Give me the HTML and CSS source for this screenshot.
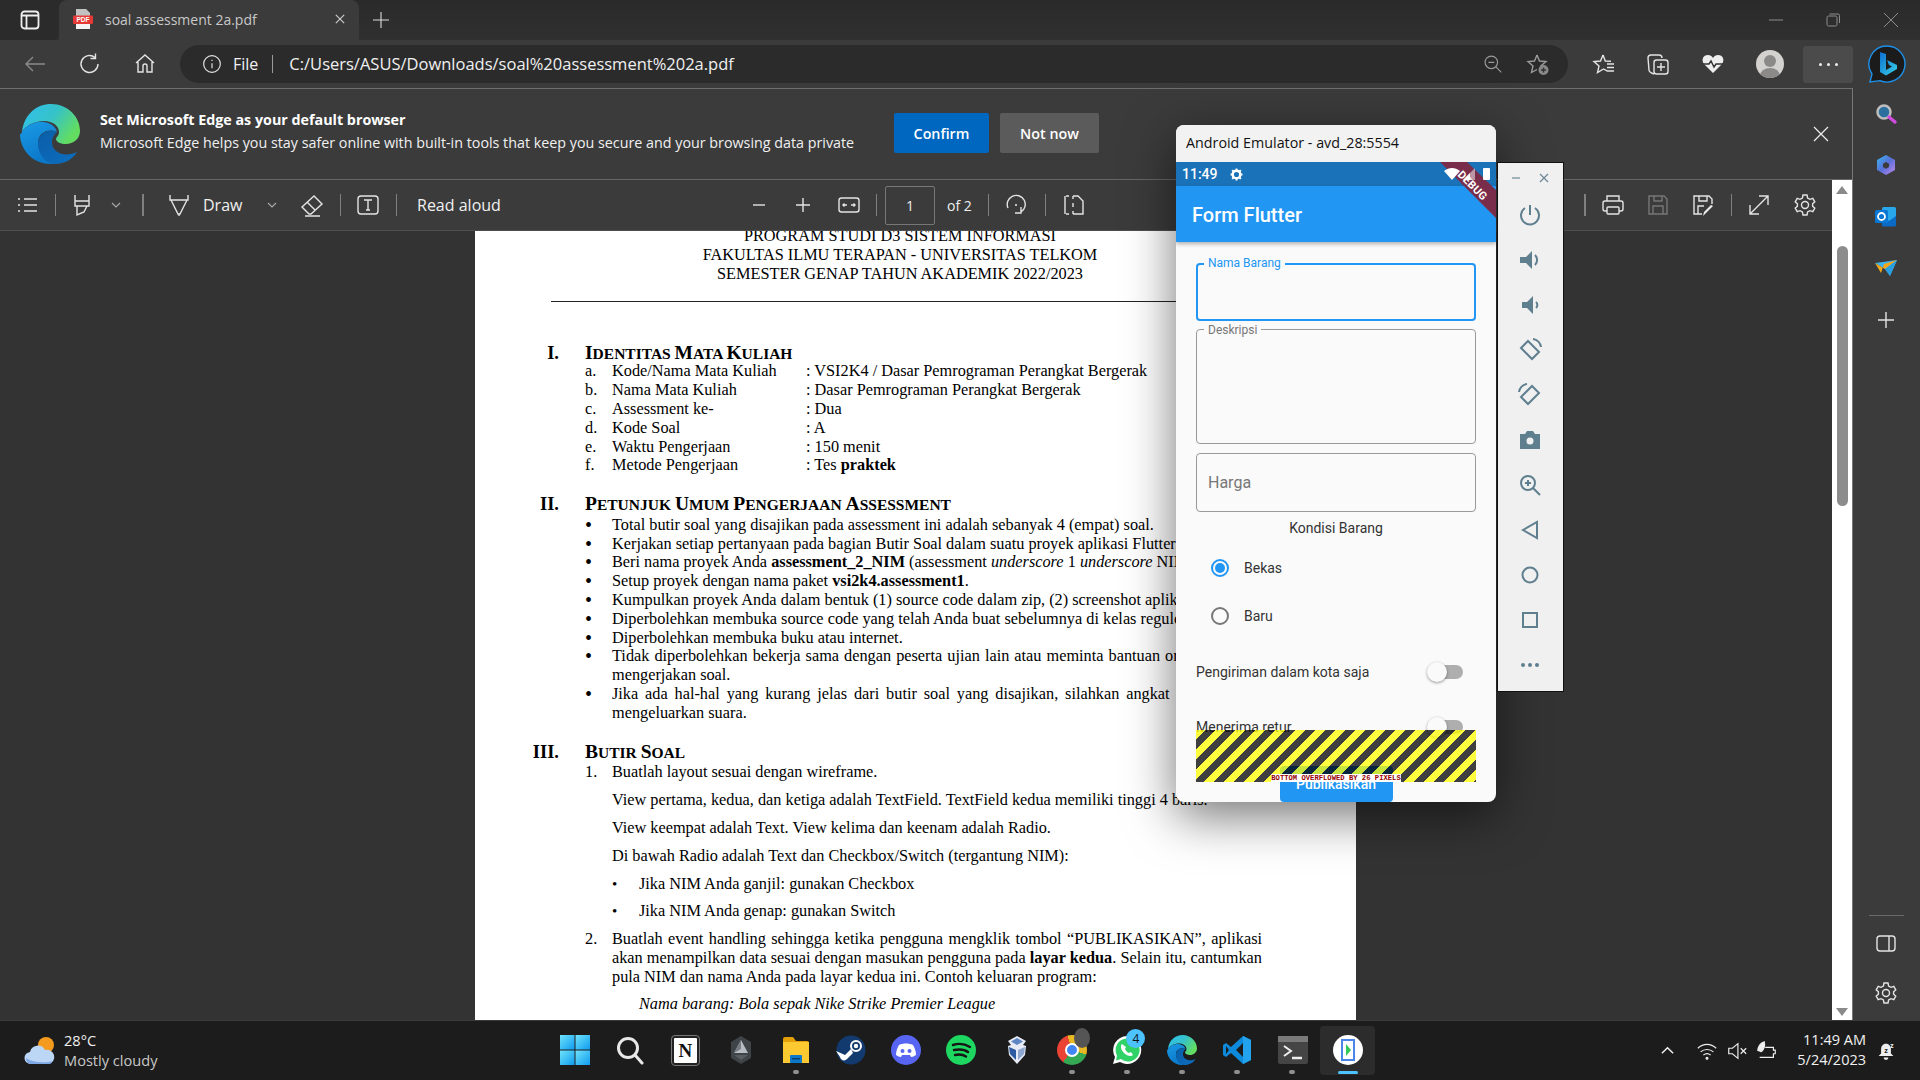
FILE: index.html
```html
<!DOCTYPE html>
<html lang="en">
<head>
<meta charset="utf-8">
<title>soal assessment 2a.pdf</title>
<link rel="stylesheet" href="styles.css">
</head>
<body>
<svg class="defs" width="0" height="0">
  <defs>
    <linearGradient id="eg1" x1="0" y1="0" x2="1" y2="0.5"><stop offset="0" stop-color="#2fc0f0"/><stop offset="0.55" stop-color="#36c2c8"/><stop offset="1" stop-color="#62dd62"/></linearGradient>
    <linearGradient id="eg2" x1="0" y1="0" x2="0.4" y2="1"><stop offset="0" stop-color="#1a9ae6"/><stop offset="1" stop-color="#0b78c8"/></linearGradient>
    <linearGradient id="eg3" x1="0" y1="0" x2="1" y2="1"><stop offset="0" stop-color="#0a5ea8"/><stop offset="1" stop-color="#0d6fc0"/></linearGradient>
    <linearGradient id="wg" x1="0" y1="0" x2="1" y2="1"><stop offset="0" stop-color="#6fe3fb"/><stop offset="1" stop-color="#0f9bef"/></linearGradient>
    <linearGradient id="bg" x1="0" y1="0" x2="1" y2="1"><stop offset="0" stop-color="#0d6fd0"/><stop offset="1" stop-color="#39d0e8"/></linearGradient>
    <linearGradient id="cg" x1="0" y1="0" x2="1" y2="1"><stop offset="0" stop-color="#35b8ef"/><stop offset="0.5" stop-color="#5a6fd8"/><stop offset="1" stop-color="#c08be8"/></linearGradient>
    <symbol id="edge" viewBox="0 0 60 60">
      <path d="M2 28C4 10 17 0 31 0c17 0 29 13 29 27 0 8-7 13-14 13-5 0-10-2-10-5 0-2 3-3 3-7 0-6-6-11-15-11C14 17 5 22 2 28z" fill="url(#eg1)"/>
      <path d="M1 30C4 22 15 17 24 18c7 1 12 5 13 10-9-4-19 1-19 11 0 9 7 17 16 21H30C13 60 0 46 0 30z" fill="url(#eg2)"/>
      <path d="M37 28c-10-4-19 2-19 12 0 9 7 20 17 20 10 0 18-5 22-12-6 3-15 4-21-1-6-5-5-14 1-19z" fill="url(#eg3)"/>
    </symbol>
  </defs>
</svg>

<header class="tabbar">
  <div class="tab-actions"><svg class="ic ic-lt" viewBox="0 0 24 24"><rect x="3.5" y="3.5" width="17" height="17" rx="3"/><path d="M3.5 7.5h17M8.5 7.5v13"/></svg></div>
  <div class="tab">
    <svg class="pdficon" viewBox="0 0 20 20"><path d="M3 0h10l4 4v16H3z" fill="#f4f4f4"/><path d="M3 0h10l4 4v3H3z" fill="#2a2a2a" opacity=".25"/><rect x="0" y="6.5" width="20" height="8.5" rx="1" fill="#e53935"/><text x="10" y="13" text-anchor="middle" class="pdftext">PDF</text></svg>
    <span class="tab-title">soal assessment 2a.pdf</span>
    <svg class="tab-x" viewBox="0 0 12 12"><path d="M1 1l10 10M11 1L1 11"/></svg>
  </div>
  <svg class="tab-plus" viewBox="0 0 18 18"><path d="M9 1v16M1 9h16"/></svg>
  <div class="winctl">
    <svg class="wc wc-min" viewBox="0 0 14 14"><path d="M0 7h14"/></svg>
    <svg class="wc wc-max" viewBox="0 0 14 14"><rect x="1" y="3" width="10" height="10" rx="1.5"/><path d="M3.5 1H12a1.5 1.5 0 0 1 1.5 1.5V10"/></svg>
    <svg class="wc wc-x" viewBox="0 0 14 14"><path d="M0 0l14 14M14 0L0 14"/></svg>
  </div>
</header>

<nav class="navbar">
  <svg class="ic ic-dim ml23" viewBox="0 0 24 24"><path d="M22 12H3M10 5l-7 7 7 7"/></svg>
  <svg class="ic ml31" viewBox="0 0 24 24"><path d="M20 12a8.5 8.5 0 1 1-3-6.5M17.5 1.500v5h-5"/></svg>
  <svg class="ic ml31" viewBox="0 0 24 24"><path d="M3 11l9-8 9 8M5 9v11h5v-6a2 2 0 0 1 4 0v6h5V9"/></svg>
  <div class="pill">
    <svg class="ic ic-20" viewBox="0 0 24 24"><circle cx="12" cy="12" r="10"/><path d="M12 11v6M12 7v1.5"/></svg>
    <span class="file">File</span>
    <span class="pill-sep"></span>
    <span class="url">C:/Users/ASUS/Downloads/soal%20assessment%202a.pdf</span>
    <svg class="ic ic-dim2 ic-20 ml-auto" viewBox="0 0 24 24"><circle cx="10" cy="10" r="7.5"/><path d="M6.5 10h7M15.5 15.5L22 22"/></svg>
    <svg class="ic ic-dim2 ml23" viewBox="0 0 24 24"><path d="M11 3l2.5 6 6.5.5-5 4.2 1 4.3M11 3L8.500 9l-6.500.5 5 4.500-1.500 6.500 5.500-3"/><circle cx="17.500" cy="18" r="5" fill="#8a8a8a" stroke="none"/><path d="M15 18h5M17.500 15.500v5" class="dark"/></svg>
  </div>
  <svg class="ic ml24" viewBox="0 0 24 24"><path d="M11 3l2.300 6 5.700.3M11 3L8.500 9l-6.500.5 5 4.500-1.500 6.500 6-3.500 4 2.200M15 12h7M15 15.500h7M15 19h7"/></svg>
  <svg class="ic ml30" viewBox="0 0 24 24"><rect x="8" y="8" width="14" height="14" rx="2.500"/><path d="M15 11v8M11 15h8M8 22C5 21 3 20 3 18L2 6c0-2 1-3 3-3h8c2 0 3 1 3 3"/></svg>
  <svg class="ic ml31" viewBox="0 0 24 24"><path class="fillw" d="M12 21L3 12C0 8 2 3 7 3c2 0 4 1 5 3 1-2 3-3 5-3 5 0 7 5 4 9z"/><path class="dark" d="M2 12h6l2-3 3 6 2-3h7"/></svg>
  <div class="avatar ml31"><span class="av-head"></span><span class="av-body"></span></div>
  <div class="dots ml19"><i></i><i></i><i></i></div>
  <svg class="bing ml15" viewBox="0 0 38 38"><path d="M19 1a18 18 0 1 1-7 34.600L2 37l2-8A18 18 0 0 1 19 1z" fill="#1b1b1b" stroke="#1e90e8" stroke-width="1.400"/><path d="M12 7l6 2v16l6-3.500-3-1.500-2-5 10 5v4l-11 6.500-6-3.500z" fill="url(#bg)"/></svg>
</nav>

<div class="main">
  <div class="content">
    <section class="infobar">
      <svg class="edge-logo"><use href="#edge"/></svg>
      <div class="info-text">
        <div class="info-title">Set Microsoft Edge as your default browser</div>
        <div class="info-desc">Microsoft Edge helps you stay safer online with built-in tools that keep you secure and your browsing data private</div>
      </div>
      <button class="btn btn-primary">Confirm</button>
      <button class="btn btn-second">Not now</button>
      <svg class="info-x" viewBox="0 0 16 16"><path d="M1 1l14 14M15 1L1 15"/></svg>
    </section>
    <div class="pdf-area">
      <div class="pdf-left">
        <div class="pdf-toolbar">
          <div class="tb-left">
            <svg class="ic ml16" viewBox="0 0 24 24"><path d="M8 6h13M8 12h13M8 18h13M2 6h2M2 12h2M2 18h2"/></svg>
            <span class="tb-sep ml15"></span>
            <svg class="ic ml14" viewBox="0 0 24 24"><path d="M5 2v6h14V2M5 8v5h14V8M7 13v9l7-3 3-6"/></svg>
            <svg class="chev ml16" viewBox="0 0 12 12"><path d="M2 4l4 4 4-4"/></svg>
            <span class="tb-sep tb-sep-b ml20"></span>
            <svg class="ic ml23" viewBox="0 0 24 24"><path d="M3 2v5h18V2M4 7l7 14h2l7-14M12 21v2"/></svg>
            <span class="tb-text tb-draw ml12">Draw</span>
            <svg class="chev ml13" viewBox="0 0 12 12"><path d="M2 4l4 4 4-4"/></svg>
            <svg class="ic ml22" viewBox="0 0 24 24"><path d="M2 14L14 3l8 8-11 10H9zM7 9l8 8M5 23h15"/></svg>
            <span class="tb-sep ml16"></span>
            <svg class="ic ml15" viewBox="0 0 24 24"><rect x="2" y="3" width="20" height="18" rx="3"/><path d="M8 7h8M12 7v10M10 17h4"/></svg>
            <span class="tb-sep ml16"></span>
            <span class="tb-text ml20">Read aloud</span>
          </div>
          <svg class="ic" viewBox="0 0 24 24"><path d="M6 12h12"/></svg>
          <svg class="ic ml20" viewBox="0 0 24 24"><path d="M5 12h14M12 5v14"/></svg>
          <svg class="ic ml22" viewBox="0 0 24 24"><rect x="2" y="5" width="20" height="14" rx="2.500"/><path d="M6 12h4M14 12h4M7.500 10.500L6 12l1.500 1.500M16.500 10.500L18 12l-1.500 1.500"/></svg>
          <span class="tb-sep ml15"></span>
          <div class="pagebox ml8">1</div>
          <span class="tb-text tb-of ml12">of 2</span>
          <span class="tb-sep ml13"></span>
          <svg class="ic ml15" viewBox="0 0 24 24"><path d="M4 15a9 9 0 1 1 13 4M17 14v6h-6"/><circle cx="12" cy="12" r="1" class="fillw"/></svg>
          <span class="tb-sep ml17"></span>
          <svg class="ic ml15" viewBox="0 0 24 24"><path d="M12 3h5l5 5v13H12M12 3v3M12 18v3M5 3h3M5 21h3M4 3v18M12 10v4"/></svg>
          <div class="tb-right">
            <span class="tb-sep tb-sep-b"></span>
            <svg class="ic ml15" viewBox="0 0 24 24"><path d="M6 8V3h12v5M6 18H4a2 2 0 0 1-2-2v-6a2 2 0 0 1 2-2h16a2 2 0 0 1 2 2v6a2 2 0 0 1-2 2h-2"/><rect x="6" y="14" width="12" height="7" rx="1"/></svg>
            <svg class="ic ic-off ml21" viewBox="0 0 24 24"><path d="M3 3h15l3 3v15H3zM8 3v5h8V3M7 21v-8h10v8"/></svg>
            <svg class="ic ml21" viewBox="0 0 24 24"><path d="M11 21H3V3h15l3 3v5M8 3v5h8V3M7 21v-8h6"/><path class="fillw" d="M22 13l-8 8-2 2 1-4 7-7z"/></svg>
            <span class="tb-sep ml16"></span>
            <svg class="ic ml15" viewBox="0 0 24 24"><path d="M3 21L21 3M12 3h9v9M3 12v9h9"/></svg>
            <svg class="ic ml22" viewBox="0 0 24 24"><circle cx="12" cy="12" r="3.500"/><path d="M10 2h4l.6 3 2.400 1.300 2.800-1 2 3.500-2.200 2v2.400l2.200 2-2 3.500-2.800-1L14.600 19 14 22h-4l-.6-3L7 17.700l-2.800 1-2-3.500 2.200-2v-2.400l-2.200-2 2-3.500 2.800 1L9.400 5z"/></svg>
          </div>
        </div>
        <div class="viewer">
          <article class="page">
            <div class="hdr">PROGRAM STUDI D3 SISTEM INFORMASI</div>
            <div class="hdr">FAKULTAS ILMU TERAPAN - UNIVERSITAS TELKOM</div>
            <div class="hdr">SEMESTER GENAP TAHUN AKADEMIK 2022/2023</div>
            <hr class="rule">
            <div class="sec sec-first"><b class="num">I.</b><h2 class="sec-title"><span class="cap">I</span>DENTITAS <span class="cap">M</span>ATA <span class="cap">K</span>ULIAH</h2></div>
            <div class="row"><span class="mk">a.</span><span class="key">Kode/Nama Mata Kuliah</span><span>: VSI2K4 / Dasar Pemrograman Perangkat Bergerak</span></div>
            <div class="row"><span class="mk">b.</span><span class="key">Nama Mata Kuliah</span><span>: Dasar Pemrograman Perangkat Bergerak</span></div>
            <div class="row"><span class="mk">c.</span><span class="key">Assessment ke-</span><span>: Dua</span></div>
            <div class="row"><span class="mk">d.</span><span class="key">Kode Soal</span><span>: A</span></div>
            <div class="row"><span class="mk">e.</span><span class="key">Waktu Pengerjaan</span><span>: 150 menit</span></div>
            <div class="row"><span class="mk">f.</span><span class="key">Metode Pengerjaan</span><span>: Tes <b>praktek</b></span></div>
            <div class="sec"><b class="num">II.</b><h2 class="sec-title"><span class="cap">P</span>ETUNJUK <span class="cap">U</span>MUM <span class="cap">P</span>ENGERJAAN <span class="cap">A</span>SSESSMENT</h2></div>
            <div class="row first"><span class="mk bl">•</span><span>Total butir soal yang disajikan pada assessment ini adalah sebanyak 4 (empat) soal.</span></div>
            <div class="row"><span class="mk bl">•</span><span>Kerjakan setiap pertanyaan pada bagian Butir Soal dalam suatu proyek aplikasi Flutter.</span></div>
            <div class="row"><span class="mk bl">•</span><span>Beri nama proyek Anda <b>assessment_2_NIM</b> (assessment <i>underscore</i> 1 <i>underscore</i> NIM).</span></div>
            <div class="row"><span class="mk bl">•</span><span>Setup proyek dengan nama paket <b>vsi2k4.assessment1</b>.</span></div>
            <div class="row"><span class="mk bl">•</span><span>Kumpulkan proyek Anda dalam bentuk (1) source code dalam zip, (2) screenshot aplikasi.</span></div>
            <div class="row"><span class="mk bl">•</span><span>Diperbolehkan membuka source code yang telah Anda buat sebelumnya di kelas reguler.</span></div>
            <div class="row"><span class="mk bl">•</span><span>Diperbolehkan membuka buku atau internet.</span></div>
            <div class="row"><span class="mk bl">•</span><span class="just">Tidak diperbolehkan bekerja sama dengan peserta ujian lain atau meminta bantuan orang lain saat</span></div>
            <div class="row"><span class="mk"></span><span>mengerjakan soal.</span></div>
            <div class="row"><span class="mk bl">•</span><span class="just">Jika ada hal-hal yang kurang jelas dari butir soal yang disajikan, silahkan angkat tangan tanpa</span></div>
            <div class="row"><span class="mk"></span><span>mengeluarkan suara.</span></div>
            <div class="sec"><b class="num">III.</b><h2 class="sec-title"><span class="cap">B</span>UTIR <span class="cap">S</span>OAL</h2></div>
            <div class="row first"><span class="mk">1.</span><span>Buatlah layout sesuai dengan wireframe.</span></div>
            <div class="row gap"><span class="mk"></span><span>View pertama, kedua, dan ketiga adalah TextField. TextField kedua memiliki tinggi 4 baris.</span></div>
            <div class="row gap"><span class="mk"></span><span>View keempat adalah Text. View kelima dan keenam adalah Radio.</span></div>
            <div class="row gap"><span class="mk"></span><span>Di bawah Radio adalah Text dan Checkbox/Switch (tergantung NIM):</span></div>
            <div class="row gap sub"><span class="mk sm">•</span><span>Jika NIM Anda ganjil: gunakan Checkbox</span></div>
            <div class="row gap sub"><span class="mk sm">•</span><span>Jika NIM Anda genap: gunakan Switch</span></div>
            <div class="row gap"><span class="mk">2.</span><span class="just">Buatlah event handling sehingga ketika pengguna mengklik tombol “PUBLIKASIKAN”, aplikasi</span></div>
            <div class="row"><span class="mk"></span><span>akan menampilkan data sesuai dengan masukan pengguna pada <b>layar kedua</b>. Selain itu, cantumkan</span></div>
            <div class="row"><span class="mk"></span><span>pula NIM dan nama Anda pada layar kedua ini. Contoh keluaran program:</span></div>
            <div class="row gap sub2"><i>Nama barang: Bola sepak Nike Strike Premier League</i></div>
          </article>
        </div>
      </div>
      <div class="scrollbar">
        <span class="arrow-up"></span>
        <span class="thumb"></span>
        <span class="arrow-down"></span>
      </div>
    </div>
  </div>
  <aside class="sidebar">
    <div class="side-item"><svg class="side-ic" viewBox="0 0 24 24"><circle cx="10" cy="10" r="6.500" fill="#2a6f9e" stroke="#bdbdbd" stroke-width="2.500"/><path d="M15 15l6 5" stroke="#d04be0" stroke-width="3.500" stroke-linecap="round" fill="none"/></svg></div>
    <div class="side-item"><svg class="side-ic" viewBox="0 0 24 24"><path d="M12 2l9 5v10l-9 5-9-5V7z" fill="url(#cg)"/><path d="M12 9l3 1.700v3.300l-3 1.700-3-1.700v-3.300z" fill="#3b3b3b"/></svg></div>
    <div class="side-item"><svg class="side-ic" viewBox="0 0 24 24"><rect x="8" y="3" width="14" height="18" rx="1.500" fill="#28a8ea"/><path d="M8 12l7 5 7-5v9a1.500 1.500 0 0 1-1.500 1.500H9.500A1.500 1.500 0 0 1 8 21z" fill="#0a6ac4"/><rect x="1" y="6" width="13" height="13" rx="1.500" fill="#0878d4"/><circle cx="7.500" cy="12.500" r="3.500" fill="none" stroke="#fff" stroke-width="1.800"/></svg></div>
    <div class="side-item"><svg class="side-ic" viewBox="0 0 24 24"><path d="M1 8l22-3-7 16-5-7z" fill="#3db4ee"/><path d="M1 8l10 6 12-9-13 4-3 9z" fill="#f2a71b"/><path d="M11 14l12-9-7 16z" fill="#2a9fe0"/></svg></div>
    <div class="side-item side-plus"><svg class="ic ic-18" viewBox="0 0 18 18"><path d="M9 1v16M1 9h16"/></svg></div>
    <span class="side-div"></span>
    <div class="side-item"><svg class="ic" viewBox="0 0 24 24"><rect x="3" y="4" width="18" height="15" rx="3"/><path d="M15 4v15"/></svg></div>
    <div class="side-item side-last"><svg class="ic" viewBox="0 0 24 24"><circle cx="12" cy="12" r="3.500"/><path d="M10 2h4l.6 3 2.400 1.300 2.800-1 2 3.500-2.200 2v2.400l2.200 2-2 3.500-2.800-1L14.600 19 14 22h-4l-.6-3L7 17.700l-2.800 1-2-3.500 2.200-2v-2.400l-2.200-2 2-3.500 2.800 1L9.400 5z"/></svg></div>
  </aside>
</div>

<footer class="taskbar">
  <div class="weather">
    <svg class="weather-ic" viewBox="0 0 32 30"><circle cx="22" cy="9" r="8" fill="#f39a1f"/><path d="M7 28a6 6 0 0 1-1-12 8 8 0 0 1 15-2 6.500 6.500 0 0 1 4 14z" fill="#bcd6f6"/><path d="M2 22a6 6 0 0 0 5 6h18a6 6 0 0 0 4-3c-8 2-20 2-27-3z" fill="#7fa9e6"/></svg>
    <div class="weather-txt"><div>28°C</div><div class="weather-sub">Mostly cloudy</div></div>
  </div>
  <div class="apps">
    <div class="app"><svg class="app-ic" viewBox="0 0 30 30"><rect width="14.500" height="14.500" fill="url(#wg)"/><rect x="15.500" width="14.500" height="14.500" fill="url(#wg)"/><rect y="15.500" width="14.500" height="14.500" fill="url(#wg)"/><rect x="15.500" y="15.500" width="14.500" height="14.500" fill="url(#wg)"/></svg></div>
    <div class="app"><svg class="app-ic" viewBox="0 0 30 30"><circle cx="13" cy="13" r="9.500" fill="none" stroke="#e8e8e8" stroke-width="3"/><path d="M20 20l7 8" stroke="#e8e8e8" stroke-width="3" stroke-linecap="round"/></svg></div>
    <div class="app"><div class="notion">N</div></div>
    <div class="app"><svg class="app-ic" viewBox="0 0 30 30"><path d="M15 1l10 6v16l-10 6-10-6V7z" fill="#3f4448"/><path d="M15 5l7 13H8z" fill="#b7bdc2"/><path d="M15 5l-7 13 7-4z" fill="#757b80"/><path d="M8 20h14l-7 5z" fill="#595e63"/></svg></div>
    <div class="app has-dot"><svg class="app-ic" viewBox="0 0 30 30"><path d="M2 4a2 2 0 0 1 2-2h8l3 4h11a2 2 0 0 1 2 2v20H2z" fill="#e3a008"/><rect x="2" y="7" width="26" height="21" fill="#fcc931"/><rect x="9" y="20" width="12" height="8" rx="1" fill="#0b78c8"/><rect x="11" y="23" width="8" height="1.500" fill="#083e70"/></svg></div>
    <div class="app"><svg class="app-ic" viewBox="0 0 30 30"><circle cx="15" cy="15" r="14.500" fill="#123a6e"/><circle cx="20" cy="11" r="5" fill="none" stroke="#fff" stroke-width="2"/><circle cx="20" cy="11" r="2.200" fill="#fff"/><path d="M0 16l9 4 6-6 2 4-6 6a4 4 0 0 1-7-2z" fill="#fff"/></svg></div>
    <div class="app"><svg class="app-ic" viewBox="0 0 30 30"><circle cx="15" cy="15" r="15" fill="#5865f2"/><path d="M8 10c4-2 10-2 14 0 2 3 3 7 3 10-2 1-3 2-5 2l-1-2H11l-1 2c-2 0-3-1-5-2 0-3 1-7 3-10z" fill="#fff"/><circle cx="11.500" cy="16" r="2" fill="#5865f2"/><circle cx="18.500" cy="16" r="2" fill="#5865f2"/></svg></div>
    <div class="app"><svg class="app-ic" viewBox="0 0 30 30"><circle cx="15" cy="15" r="15" fill="#1ed760"/><path d="M7 10c6-2 12-1 17 2M8 15c5-1 10-1 14 2M9 20c4-1 8-.5 11 1.500" fill="none" stroke="#151515" stroke-width="2.400" stroke-linecap="round"/></svg></div>
    <div class="app"><svg class="app-ic" viewBox="0 0 30 30"><path d="M15 1l9 5-3 4 3 1-1 9-8 9-8-9-1-9 3-1-3-4z" fill="#e6ebf5"/><path d="M15 3l6 3.500-6 3.500-6-3.500z" fill="#5f86c4"/><path d="M7 12l7 3v10l-6-6z" fill="#2c5aa0"/><path d="M23 12l-7 3v10l6-6z" fill="#8fa8d2"/></svg></div>
    <div class="app has-dot"><div class="chrome"><span class="chrome-in"></span></div><span class="app-mini"></span></div>
    <div class="app has-dot"><svg class="app-ic" viewBox="0 0 30 30"><path d="M15 1a14 14 0 0 0-12 21L1 29l7-2A14 14 0 1 0 15 1z" fill="#fff"/><path d="M15 3.500a11.500 11.500 0 0 0-10 17l-1 5 5-1.500A11.500 11.500 0 1 0 15 3.500z" fill="#2fd266"/><path d="M10 9c-2 2-1 6 2 9s7 4 9 2l-2-3-2 1c-2-1-3-2-4-4l1-2z" fill="#fff"/></svg><span class="badge">4</span></div>
    <div class="app has-dot"><svg class="app-ic"><use href="#edge"/></svg></div>
    <div class="app has-dot"><svg class="app-ic" viewBox="0 0 30 30"><path d="M21 1l8 4v20l-8 4L9 18l-5 4-3-2v-10l3-2 5 4z" fill="#0d8adb"/><path d="M21 8l-7 7 7 7z" fill="#1c1c1c"/><path d="M21 1l8 4v20l-8 4z" fill="#23a3ee"/><path d="M4 11l3 4-3 4z" fill="#1c1c1c"/></svg></div>
    <div class="app has-dot"><svg class="app-ic" viewBox="0 0 30 30"><rect y="1" width="30" height="28" rx="2" fill="#454545"/><rect y="1" width="30" height="6" fill="#7a7a7a"/><path d="M6 11l7 5-7 5" fill="none" stroke="#eee" stroke-width="2"/><path d="M14 23h10" stroke="#eee" stroke-width="2.500"/></svg></div>
    <div class="app app-active"><svg class="app-ic" viewBox="0 0 30 30"><circle cx="15" cy="15" r="15" fill="#fff"/><rect x="9" y="5" width="12" height="20" fill="none" stroke="#4a86e8" stroke-width="2"/><path d="M13 9l5 6-5 6z" fill="#34c759"/></svg><span class="app-bar"></span></div>
  </div>
  <div class="tray">
    <svg class="tray-ic tray-chev" viewBox="0 0 16 16"><path d="M2 11l6-6 6 6"/></svg>
    <svg class="tray-ic" viewBox="0 0 24 24"><path d="M2 9c6-5.500 14-5.500 20 0M5 13c4-3.500 10-3.500 14 0M8 16.500c2.500-2 5.500-2 8 0"/><circle cx="12" cy="20" r="1" fill="#eee"/></svg>
    <svg class="tray-ic" viewBox="0 0 24 24"><path d="M3 9h4l6-5v16l-6-5H3zM16 9l6 6M22 9l-6 6"/></svg>
    <svg class="tray-ic" viewBox="0 0 24 24"><path d="M10 8h9v3h2v4h-2v4H4"/><path d="M2 12c0-5 3-9 7-10 1 4 0 9-4 11" fill="#eee"/></svg>
    <div class="clock"><div>11:49 AM</div><div>5/24/2023</div></div>
    <svg class="bell" viewBox="0 0 22 24"><path d="M11 3c-4 0-6 3-6 7v5l-3 3h18l-3-3v-5c0-4-2-7-6-7z" fill="#eee"/><path d="M8 20h6a3 3 0 0 1-6 0z" fill="#eee"/><text x="11" y="15" text-anchor="middle" class="zz">z</text><text x="18" y="8" text-anchor="middle" class="zz zw">z</text></svg>
  </div>
</footer>

<!-- Android emulator window floating over the desktop -->
<div class="emu">
  <div class="emu-title">Android Emulator - avd_28:5554</div>
  <div class="status">
    <span class="st-time">11:49</span>
    <svg class="st-gear" viewBox="0 0 24 24"><circle cx="12" cy="12" r="7" fill="none" stroke="#fff" stroke-width="4.500"/><path d="M12 1v4M12 19v4M1 12h4M19 12h4M4 4l3 3M17 17l3 3M20 4l-3 3M7 17l-3 3" stroke="#fff" stroke-width="3.500"/></svg>
    <svg class="st-wifi" viewBox="0 0 16 12"><path d="M0 3c5-4 11-4 16 0L8 12z" fill="#fff"/></svg>
    <svg class="st-sig" viewBox="0 0 12 12"><path d="M12 0v12H0z" fill="#fff" opacity=".5"/><path d="M7 5v7H0z" fill="#fff"/></svg>
    <span class="st-batt"></span>
  </div>
  <div class="appbar">Form Flutter</div>
  <div class="form">
    <div class="field field-focus"><label class="flabel flabel-blue">Nama Barang</label></div>
    <div class="field field-tall"><label class="flabel">Deskripsi</label></div>
    <div class="field field-hint"><span>Harga</span></div>
    <div class="kondisi">Kondisi Barang</div>
    <div class="radio-row radio-first"><span class="radio radio-on"></span><span>Bekas</span></div>
    <div class="radio-row"><span class="radio"></span><span>Baru</span></div>
    <div class="switch-row switch-first"><span>Pengiriman dalam kota saja</span><span class="switch"></span></div>
    <div class="switch-row"><span>Menerima retur</span><span class="switch"></span></div>
    <button class="publish">Publikasikan</button>
    <div class="hazard"><span class="overflow-msg">BOTTOM OVERFLOWED BY 26 PIXELS</span></div>
  </div>
  <svg class="ribbon" viewBox="0 0 56 56"><path d="M0 0h27l29 28v28z" fill="#7a2d4a"/></svg>
  <span class="ribbon-txt">DEBUG</span>
</div>
<div class="emu-tools">
  <div class="tool-top"><svg class="tool-mini" viewBox="0 0 10 10"><path d="M1 5h8"/></svg><svg class="tool-mini" viewBox="0 0 10 10"><path d="M1 1l8 8M9 1L1 9"/></svg></div>
  <div class="tool"><svg viewBox="0 0 24 24" class="t-s"><path d="M12 2v10M7 5a9 9 0 1 0 10 0"/></svg></div>
  <div class="tool"><svg viewBox="0 0 24 24"><path class="t-f" d="M2 9h6l6-6v18l-6-6H2z"/><path class="t-s" d="M17 7a7 7 0 0 1 0 10"/></svg></div>
  <div class="tool"><svg viewBox="0 0 24 24"><path class="t-f" d="M4 9h5l6-6v18l-6-6H4z"/><path class="t-s" d="M18 9a4 4 0 0 1 0 6"/></svg></div>
  <div class="tool"><svg viewBox="0 0 24 24" class="t-s"><path d="M10 3l11 11-7 7L3 10zM15 1a9 9 0 0 1 8 8"/></svg></div>
  <div class="tool"><svg viewBox="0 0 24 24" class="t-s"><path d="M14 3L3 14l7 7 11-11zM1 9a9 9 0 0 1 8-8"/></svg></div>
  <div class="tool"><svg viewBox="0 0 24 24"><path class="t-f" d="M2 6h5l2-3h6l2 3h5v15H2z"/><circle cx="12" cy="13" r="3.500" fill="#f0f0f0"/></svg></div>
  <div class="tool"><svg viewBox="0 0 24 24" class="t-s"><circle cx="10" cy="10" r="7"/><path d="M15 15l7 7M10 7v6M7 10h6"/></svg></div>
  <div class="tool"><svg viewBox="0 0 24 24" class="t-s"><path d="M19 4v16L5 12z"/></svg></div>
  <div class="tool"><svg viewBox="0 0 24 24" class="t-s"><circle cx="12" cy="12" r="7.500"/></svg></div>
  <div class="tool"><svg viewBox="0 0 24 24" class="t-s"><rect x="5" y="5" width="14" height="14"/></svg></div>
  <div class="tool"><svg viewBox="0 0 24 24"><circle class="t-f" cx="5" cy="12" r="2"/><circle class="t-f" cx="12" cy="12" r="2"/><circle class="t-f" cx="19" cy="12" r="2"/></svg></div>
</div>
</body>
</html>
```
FILE: styles.css
```css
* { box-sizing: border-box; }
html, body { margin: 0; padding: 0; height: 100%; overflow: hidden; }
body {
  width: 1920px; height: 1080px; position: relative;
  display: flex; flex-direction: column;
  background: #333; color: #eee;
  font-family: "Open Sans", "Noto Sans", sans-serif; font-size: 14px;
}
.defs { position: absolute; }

/* margin helpers for the toolbar rhythm */
.ml8 { margin-left: 8px; } .ml12 { margin-left: 12px; } .ml13 { margin-left: 13px; } .ml14 { margin-left: 14px; }
.ml15 { margin-left: 15px; } .ml16 { margin-left: 16px; } .ml17 { margin-left: 17px; } .ml19 { margin-left: 19px; }
.ml20 { margin-left: 20px; } .ml21 { margin-left: 21px; } .ml22 { margin-left: 22px; } .ml23 { margin-left: 23px; }
.ml24 { margin-left: 24px; } .ml30 { margin-left: 30px; } .ml31 { margin-left: 31px; } .ml-auto { margin-left: auto; }

.ic { width: 24px; height: 24px; flex: none; fill: none; stroke: #e4e4e4; stroke-width: 1.4; }
.ic-20 { width: 20px; height: 20px; }
.ic-18 { width: 18px; height: 18px; }
.ic-dim { stroke: #8a8a8a; }
.ic-dim2 { stroke: #9a9a9a; }
.ic-off { stroke: #777; }
.ic-lt { stroke: #eee; stroke-width: 1.8; }
.ic .fillw, .fillw { fill: #eee; stroke: none; }
.ic .dark { stroke: #333; stroke-width: 1.4; fill: none; }

/* tab strip */
.tabbar { height: 40px; flex: none; display: flex; align-items: flex-end; position: relative; background: linear-gradient(#2a2a2a, #303030); }
.tab-actions { width: 59px; height: 40px; background: #2b2b2b; display: flex; align-items: center; justify-content: center; border-bottom-right-radius: 6px; }
.tab { width: 300px; height: 40px; background: #3b3b3b; border-radius: 8px 8px 0 0; display: flex; align-items: center; padding: 0 0 2px 14px; }
.pdficon { width: 20px; height: 20px; flex: none; }
.pdftext { font: 700 6.5px "Liberation Sans", sans-serif; fill: #fff; }
.tab-title { margin-left: 12px; font-size: 14px; color: #c8c8c8; width: 220px; white-space: nowrap; }
.tab-x { width: 10px; height: 10px; stroke: #c8c8c8; stroke-width: 1.5; fill: none; margin-left: 10px; flex: none; }
.tab-plus { width: 18px; height: 18px; stroke: #ddd; stroke-width: 1.1; fill: none; margin: 0 0 11px 13px; flex: none; }
.winctl { margin-left: auto; height: 40px; display: flex; align-items: center; padding-right: 22px; }
.wc { width: 14px; height: 14px; flex: none; fill: none; stroke: #8d8d8d; stroke-width: 1; overflow: visible; }
.wc-max { margin-left: 43px; }
.wc-x { margin-left: 44px; }

/* address bar */
.navbar { height: 48px; flex: none; display: flex; align-items: center; background: #3b3b3b; }
.pill { width: 1388px; height: 38px; margin-left: 23px; border-radius: 19px; background: #2b2b2b; display: flex; align-items: center; padding: 0 18px 0 22px; flex: none; }
.file { margin-left: 11px; font-size: 16px; color: #f0f0f0; }
.pill-sep { width: 1px; height: 18px; background: #9a9a9a; margin-left: 14px; }
.url { margin: -2px 0 0 16px; font-size: 16.5px; color: #f0f0f0; white-space: nowrap; }
.avatar { width: 28px; height: 28px; border-radius: 50%; background: #d4d2cf; position: relative; overflow: hidden; flex: none; }
.av-head { position: absolute; left: 8px; top: 5px; width: 12px; height: 12px; border-radius: 50%; background: #8c8a88; }
.av-body { position: absolute; left: 4px; top: 18px; width: 20px; height: 16px; border-radius: 50%; background: #8c8a88; }
.dots { width: 50px; height: 37px; background: #4b4b4b; border-radius: 3px; display: flex; align-items: center; justify-content: center; gap: 5px; flex: none; }
.dots i { width: 3px; height: 3px; border-radius: 50%; background: #eee; }
.bing { width: 38px; height: 38px; flex: none; }

.main { flex: 1; display: flex; min-height: 0; }
.content { width: 1853px; flex: none; display: flex; flex-direction: column; border-top: 1px solid #6e6e6e; border-right: 1px solid #777; }

/* default browser prompt */
.infobar { height: 91px; flex: none; display: flex; align-items: center; padding-left: 20px; background: #3b3b3b; border-bottom: 1px solid #666; }
.edge-logo { width: 60px; height: 60px; flex: none; }
.info-text { margin: 0 0 4px 20px; width: 794px; flex: none; }
.info-title { font-weight: 700; font-size: 14.3px; line-height: 22px; color: #fff; white-space: nowrap; }
.info-desc { font-size: 14.3px; line-height: 24px; color: #f0f0f0; white-space: nowrap; }
.btn { height: 40px; margin-bottom: 2px; border: 0; border-radius: 2px; font: 600 14.3px "Open Sans", sans-serif; color: #fff; flex: none; }
.btn-primary { width: 95px; background: #0067c0; }
.btn-second { width: 99px; margin-left: 11px; background: #5b5b5b; }
.info-x { width: 16px; height: 16px; stroke: #eee; stroke-width: 1.2; fill: none; margin-left: 714px; flex: none; }

.pdf-area { flex: 1; display: flex; min-height: 0; }
.pdf-left { flex: 1; min-width: 0; display: flex; flex-direction: column; }

/* pdf toolbar */
.pdf-toolbar { height: 51px; flex: none; display: flex; align-items: center; background: #3b3b3b; border-bottom: 1px solid #4e4e4e; }
.tb-left { width: 747px; flex: none; display: flex; align-items: center; }
.tb-right { margin-left: auto; padding-right: 15px; display: flex; align-items: center; }
.tb-sep { width: 1px; height: 22px; background: #808080; flex: none; }
.tb-sep-b { width: 2px; }
.tb-text { font-size: 16px; color: #f0f0f0; white-space: nowrap; flex: none; }
.tb-draw { width: 50px; }
.tb-of { width: 28px; font-size: 14px; }
.chev { width: 12px; height: 12px; fill: none; stroke: #aaa; stroke-width: 1.1; flex: none; }
.pagebox { width: 50px; height: 39px; border: 1px solid #777; border-radius: 2px; text-align: center; line-height: 37px; font-size: 14px; color: #eee; flex: none; }

/* pdf viewer */
.viewer { flex: 1; min-height: 0; overflow: hidden; background: #333; }
.page {
  width: 881px; margin: -4px 0 0 475px; padding-bottom: 40px; background: #fff; color: #000;
  font-family: "Liberation Serif", serif; font-size: 16.3px; line-height: 18.8px;
}
.hdr { margin-left: 76px; width: 698px; text-align: center; white-space: nowrap; }
.rule { margin: 18px 0 0 76px; width: 805px; border: 0; height: 1px; background: #222; }
.sec { display: flex; align-items: baseline; height: 19px; margin-top: 19.2px; line-height: 19px; }
.sec-first { margin-top: 41px; }
.num { width: 84px; text-align: right; font-size: 18.500px; flex: none; }
.sec-title { margin: 0 0 0 26px; font-size: 15.500px; font-weight: 700; white-space: nowrap; }
.cap { font-size: 19.500px; }
.row { display: flex; margin-left: 110px; white-space: nowrap; }
.first { margin-top: 2.5px; }
.gap { margin-top: 9px; }
.mk { width: 27px; flex: none; }
.bl { font-size: 20px; }
.key { width: 194px; flex: none; }
.just { display: block; width: 650px; white-space: normal; text-align: justify; text-align-last: justify; }
.sub { margin-left: 137px; }
.sub2 { margin-left: 164px; }
.sm { font-size: 15px; }

/* scrollbar */
.scrollbar { width: 20px; flex: none; background: #fff; display: flex; flex-direction: column; align-items: center; padding: 6px 0 4px; }
.arrow-up { width: 0; height: 0; border: 6px solid transparent; border-top: 0; border-bottom: 8px solid #8a8a8a; }
.thumb { width: 11px; height: 260px; margin-top: 52px; background: #8c8c8c; border-radius: 6px; }
.arrow-down { width: 0; height: 0; border: 6px solid transparent; border-bottom: 0; border-top: 8px solid #8a8a8a; margin-top: auto; }

/* side rail */
.sidebar { flex: 1; display: flex; flex-direction: column; align-items: center; background: #3b3b3b; padding-right: 1px; }
.side-item { height: 51px; width: 100%; flex: none; display: flex; align-items: center; justify-content: center; }
.side-ic { width: 24px; height: 24px; }
.side-plus { margin-top: 2px; }
.side-div { width: 35px; height: 1px; background: #6a6a6a; margin: auto 0 2px; }
.side-last { padding-bottom: 3px; }

/* taskbar */
.taskbar { height: 60px; flex: none; display: flex; align-items: center; background: #1c1c1c; border-top: 1px solid #3a3a3a; position: relative; }
.weather { width: 547.500px; flex: none; display: flex; align-items: center; padding-left: 24px; }
.weather-ic { width: 32px; height: 30px; flex: none; }
.weather-txt { margin: -2px 0 0 8px; font-size: 14.600px; line-height: 20px; color: #f0f0f0; white-space: nowrap; }
.weather-sub { color: #c8c8c8; }
.apps { display: flex; margin-top: -1px; }
.app { width: 55.200px; height: 49px; flex: none; display: flex; align-items: center; justify-content: center; position: relative; }
.app-ic { width: 30px; height: 30px; flex: none; }
.has-dot::after { content: ""; position: absolute; left: 24.500px; bottom: 1px; width: 6px; height: 4px; border-radius: 2px; background: #8f8f8f; }
.notion { width: 27px; height: 29px; background: #fff; border: 2px solid #222; outline: 1px solid #777; border-radius: 3px; color: #111; font: 700 19px/25px "Liberation Serif", serif; text-align: center; }
.chrome { width: 30px; height: 30px; border-radius: 50%; background: conic-gradient(#e8b923 0 30%, #e7b91f 30%, #34a853 30% 60%, #ea4335 60% 95%, #e8b923 95%); display: flex; align-items: center; justify-content: center; }
.chrome-in { width: 14px; height: 14px; border-radius: 50%; background: #4285f4; border: 2px solid #fff; }
.app-mini { position: absolute; left: 30px; top: 2px; width: 16px; height: 20px; border-radius: 50%; background: #555; }
.badge { position: absolute; left: 27px; top: 3px; width: 19px; height: 19px; border-radius: 50%; background: #4cc2ff; color: #111; font-size: 12px; line-height: 19px; text-align: center; }
.app-active { background: #2c2c2c; border-radius: 4px; }
.app-bar { position: absolute; left: 17.500px; bottom: 1px; width: 20px; height: 3px; border-radius: 2px; background: #4cc2ff; }
.tray { margin-left: auto; display: flex; align-items: center; padding-right: 25px; }
.tray-ic { width: 22px; height: 22px; flex: none; fill: none; stroke: #eee; stroke-width: 1.300; margin-left: 8px; }
.tray-chev { width: 15px; height: 15px; stroke-width: 1.600; margin-right: 13px; }
.clock { width: 80px; margin: -2px 0 0 8px; text-align: right; font-size: 14.500px; line-height: 20px; color: #f0f0f0; white-space: nowrap; }
.bell { width: 18px; height: 20px; margin-left: 11px; flex: none; }
.zz { font: 700 9px "Liberation Sans", sans-serif; fill: #222; }
.zw { fill: #eee; }

/* emulator */
.emu {
  position: absolute; left: 1176px; top: 125px; width: 320px; height: 677px;
  display: flex; flex-direction: column; overflow: hidden; border-radius: 8px;
  background: #fafafa; box-shadow: 0 14px 50px rgba(0,0,0,.55);
  font-family: Roboto, sans-serif; color: #333;
}
.emu-title { height: 37px; flex: none; background: #f2f2f2; color: #111; padding: 0 0 0 10px; font: 14.300px/36px "Open Sans", sans-serif; white-space: nowrap; }
.status { height: 24px; flex: none; background: #1a72b8; color: #fff; display: flex; align-items: center; padding-left: 6px; position: relative; }
.st-time { font-size: 14px; font-weight: 500; }
.st-gear { width: 13px; height: 13px; margin-left: 12px; flex: none; }
.st-wifi, .st-sig, .st-batt { position: relative; z-index: 2; }
.st-wifi { width: 16px; height: 12px; margin-left: 201px; flex: none; }
.st-sig { width: 12px; height: 12px; margin-left: 3px; flex: none; }
.st-batt { width: 7px; height: 12px; margin-left: 8px; background: #fff; border-radius: 1px; flex: none; }
.appbar { height: 56px; flex: none; background: #2196f3; color: #fff; font-size: 20px; font-weight: 500; line-height: 58px; padding-left: 16px; box-shadow: 0 2px 4px rgba(0,0,0,.3); position: relative; }
.form { flex: 1; padding: 21px 20px 0; display: flex; flex-direction: column; position: relative; min-height: 0; }
.field { height: 58px; flex: none; border: 1px solid #999; border-radius: 4px; position: relative; }
.field-focus { height: 58px; border: 2px solid #2196f3; }
.field-tall { height: 115px; margin-top: 8px; }
.field-hint { height: 59px; margin-top: 9px; display: flex; align-items: center; padding-left: 11px; font-size: 16px; color: #777; }
.flabel { position: absolute; left: 7px; top: -7px; padding: 0 4px; background: #fafafa; font-size: 12px; line-height: 14px; color: #777; white-space: nowrap; }
.flabel-blue { left: 6px; top: -9px; color: #2196f3; }
.kondisi { margin-top: 6px; line-height: 20px; text-align: center; font-size: 14px; color: #333; }
.radio-row { height: 48px; flex: none; display: flex; align-items: center; padding-left: 15px; font-size: 14px; gap: 15px; }
.radio-first { margin-top: 6px; }
.radio { width: 18px; height: 18px; border: 2px solid #777; border-radius: 50%; flex: none; position: relative; }
.radio-on { border-color: #2196f3; }
.radio-on::after { content: ""; position: absolute; left: 2px; top: 2px; width: 10px; height: 10px; border-radius: 50%; background: #2196f3; }
.switch-row { height: 48px; flex: none; margin-top: 7px; display: flex; align-items: center; font-size: 14px; position: relative; white-space: nowrap; }
.switch-first { margin-top: 8px; }
.switch { position: absolute; left: 241px; width: 26px; height: 14px; top: 17px; border-radius: 7px; background: #aeaeae; }
.switch::after { content: ""; position: absolute; left: -10px; top: -3px; width: 20px; height: 20px; border-radius: 50%; background: #fafafa; box-shadow: 0 1px 3px rgba(0,0,0,.4); }
.publish { width: 113px; height: 36px; flex: none; align-self: center; margin-top: 15px; border: 0; border-radius: 4px; background: #2196f3; color: #fff; font: 500 14px Roboto, sans-serif; padding: 0; }
.hazard {
  position: absolute; left: 20px; top: 488px; width: 280px; height: 52px; overflow: hidden;
  background: repeating-linear-gradient(135deg, rgba(255,255,0,.75) 0 7.07px, rgba(0,0,0,.75) 7.07px 14.14px);
}
.overflow-msg { position: absolute; left: 75px; bottom: 0; width: 130px; height: 8px; background: #fff; color: #900; font: 700 7.200px/8px "Liberation Mono", monospace; text-align: center; white-space: nowrap; }
.ribbon { position: absolute; left: 264px; top: 37px; width: 56px; height: 56px; z-index: 1; }
.ribbon-txt { position: absolute; left: 274px; top: 55px; width: 44px; z-index: 3; text-align: center; color: #fff; font-size: 11px; font-weight: 700; line-height: 12px; letter-spacing: .3px; transform: rotate(45deg); }

.emu-tools { position: absolute; left: 1497px; top: 162px; width: 67px; height: 530px; background: #f0f0f0; border: 1.500px solid #111; padding-right: 1.500px; display: flex; flex-direction: column; }
.tool-top { height: 29px; flex: none; display: flex; align-items: center; justify-content: center; gap: 18px; }
.tool-mini { width: 10px; height: 10px; fill: none; stroke: #6b8796; stroke-width: 1.200; }
.tool { height: 45px; flex: none; display: flex; align-items: center; justify-content: center; }
.tool svg { width: 24px; height: 24px; overflow: visible; }
.t-s { fill: none; stroke: #5f7f8f; stroke-width: 2; }
.t-f { fill: #5f7f8f; }
```
